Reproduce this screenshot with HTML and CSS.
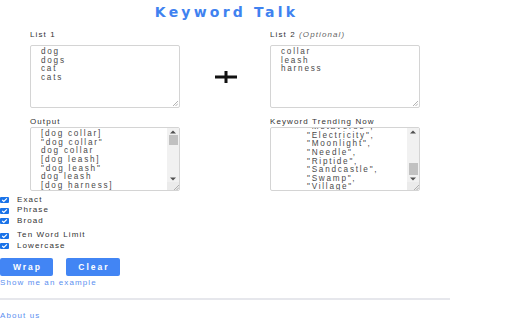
FILE: index.html
```html
<!DOCTYPE html>
<html lang="en">
<head>
<meta charset="utf-8">
<title>Keyword Talk</title>
<link rel="stylesheet" href="styles.css">
</head>
<body>
<h1 class="title">Keyword Talk</h1>

<div class="lists">
  <div class="field">
    <div class="label">List 1</div>
    <div class="box">
      <div class="box-text">dog
dogs
cat
cats</div>
      <span class="grip"><svg width="6" height="6" viewBox="0 0 6 6"><path d="M1 6 L6 1 M3.5 6 L6 3.5" stroke="#a0a0a0" stroke-width="0.8"/></svg></span>
    </div>
  </div>

  <div class="plus">
    <svg width="22" height="12" viewBox="0 0 22 12"><rect x="0" y="4.5" width="22" height="3" fill="#111"/><rect x="9.5" y="0" width="3" height="12" fill="#111"/></svg>
  </div>

  <div class="field">
    <div class="label">List 2 <i class="optional">(Optional)</i></div>
    <div class="box">
      <div class="box-text">collar
leash
harness</div>
      <span class="grip"><svg width="6" height="6" viewBox="0 0 6 6"><path d="M1 6 L6 1 M3.5 6 L6 3.5" stroke="#a0a0a0" stroke-width="0.8"/></svg></span>
    </div>
  </div>

  <div class="field field-low">
    <div class="label label-low">Output</div>
    <div class="box box-scroll">
      <div class="box-text">[dog collar]
"dog collar"
dog collar
[dog leash]
"dog leash"
dog leash
[dog harness]
"dog harness"
dog harness</div>
      <div class="scrollbar">
        <span class="sb-btn"><svg width="6" height="4" viewBox="0 0 6 4"><path d="M0 3.5 L3 0.5 L6 3.5 Z" fill="#505050"/></svg></span>
        <span class="sb-track"><span class="sb-thumb thumb-top"></span></span>
        <span class="sb-btn"><svg width="6" height="4" viewBox="0 0 6 4"><path d="M0 0.5 L3 3.5 L6 0.5 Z" fill="#505050"/></svg></span>
        <span class="sb-corner"><svg width="6" height="6" viewBox="0 0 6 6"><path d="M1 6 L6 1 M3.5 6 L6 3.5" stroke="#a0a0a0" stroke-width="0.8"/></svg></span>
      </div>
    </div>
  </div>

  <div class="spacer"></div>

  <div class="field field-low">
    <div class="label label-low">Keyword Trending Now</div>
    <div class="box box-scroll">
      <div class="box-text trending"><div class="trend-inner">"Metaverse",
"Electricity",
"Moonlight",
"Needle",
"Riptide",
"Sandcastle",
"Swamp",
"Village"</div></div>
      <div class="scrollbar">
        <span class="sb-btn"><svg width="6" height="4" viewBox="0 0 6 4"><path d="M0 3.5 L3 0.5 L6 3.5 Z" fill="#505050"/></svg></span>
        <span class="sb-track sb-track-end"><span class="sb-thumb thumb-bottom"></span></span>
        <span class="sb-btn"><svg width="6" height="4" viewBox="0 0 6 4"><path d="M0 0.5 L3 3.5 L6 0.5 Z" fill="#505050"/></svg></span>
        <span class="sb-corner"><svg width="6" height="6" viewBox="0 0 6 6"><path d="M1 6 L6 1 M3.5 6 L6 3.5" stroke="#a0a0a0" stroke-width="0.8"/></svg></span>
      </div>
    </div>
  </div>
</div>

<div class="options">
  <div class="opt-group">
    <div class="opt"><span class="check"><svg width="9" height="6" viewBox="0 0 9 6"><path d="M2.2 3 L3.8 4.5 L6.9 1.4" stroke="#fff" stroke-width="1.2" fill="none"/></svg></span>Exact</div>
    <div class="opt"><span class="check"><svg width="9" height="6" viewBox="0 0 9 6"><path d="M2.2 3 L3.8 4.5 L6.9 1.4" stroke="#fff" stroke-width="1.2" fill="none"/></svg></span>Phrase</div>
    <div class="opt"><span class="check"><svg width="9" height="6" viewBox="0 0 9 6"><path d="M2.2 3 L3.8 4.5 L6.9 1.4" stroke="#fff" stroke-width="1.2" fill="none"/></svg></span>Broad</div>
  </div>
  <div class="opt-group opt-group-2">
    <div class="opt"><span class="check"><svg width="9" height="6" viewBox="0 0 9 6"><path d="M2.2 3 L3.8 4.5 L6.9 1.4" stroke="#fff" stroke-width="1.2" fill="none"/></svg></span>Ten Word Limit</div>
    <div class="opt"><span class="check"><svg width="9" height="6" viewBox="0 0 9 6"><path d="M2.2 3 L3.8 4.5 L6.9 1.4" stroke="#fff" stroke-width="1.2" fill="none"/></svg></span>Lowercase</div>
  </div>
</div>

<div class="buttons">
  <button class="btn btn-wrap">Wrap</button>
  <button class="btn btn-clear">Clear</button>
</div>

<a class="link example" href="#">Show me an example</a>
<div class="rule"></div>
<a class="link about" href="#">About us</a>
</body>
</html>
```

FILE: styles.css
```css
html, body {
  margin: 0;
  padding: 0;
  background: #fff;
}
body {
  font-family: "Liberation Sans", Arial, sans-serif;
  font-size: 8px;
  letter-spacing: 1.1px;
  color: #333;
  width: 512px;
  height: 320px;
  overflow: hidden;
}
.title {
  margin: 0;
  width: 450px;
  height: 24px;
  font-family: "DejaVu Sans", "Liberation Sans", sans-serif;
  font-size: 14px;
  line-height: 24px;
  font-weight: bold;
  letter-spacing: 3.2px;
  color: #3f82f0;
  text-align: center;
  padding-left: 3px;
  box-sizing: border-box;
}
.lists {
  display: grid;
  grid-template-columns: 150px 90px 150px;
  margin-left: 30px;
  padding-top: 5px;
}
.label {
  line-height: 12px;
  margin-bottom: 4px;
  color: #333;
}
.optional {
  color: #666;
}
.field-low {
  margin-top: 8px;
}
.label-low {
  line-height: 11px;
  margin-bottom: 0;
}
.box {
  position: relative;
  box-sizing: border-box;
  height: 63px;
  border: 1px solid #d4d4d4;
  border-radius: 2px;
  background: #fff;
  overflow: hidden;
}
.field-low .box {
  height: 64px;
}
.box-text {
  white-space: pre;
  font-size: 8.2px;
  line-height: 8.6px;
  letter-spacing: 1.75px;
  color: #4a4a4a;
  padding: 2.2px 0 0 10px;
}
.box-scroll {
  display: flex;
}
.box-scroll .box-text {
  flex: 1;
  overflow: hidden;
}
.trending {
  padding-left: 36px;
}
.trend-inner {
  margin-top: -7px;
}
.grip {
  position: absolute;
  right: 1px;
  bottom: 1px;
  width: 6px;
  height: 6px;
  display: flex;
}
.plus {
  display: flex;
  align-items: center;
  justify-content: center;
  padding-top: 16px;
  padding-left: 2px;
}
.scrollbar {
  width: 12px;
  display: flex;
  flex-direction: column;
  background: #f1f1f1;
}
.sb-btn {
  height: 7px;
  display: flex;
  align-items: center;
  justify-content: center;
}
.sb-track {
  flex: 1;
  display: flex;
  flex-direction: column;
  align-items: center;
}
.sb-track-end {
  justify-content: flex-end;
}
.sb-thumb {
  width: 9px;
  background: #c1c1c1;
}
.thumb-top {
  height: 10px;
}
.thumb-bottom {
  height: 12px;
}
.sb-corner {
  height: 8px;
  background: #ebebeb;
  display: flex;
  align-items: flex-end;
  justify-content: flex-end;
}
.options {
  margin-top: 4px;
}
.opt {
  display: flex;
  align-items: center;
  line-height: 10.4px;
  height: 10.4px;
  color: #333;
}
.opt-group-2 {
  margin-top: 4.3px;
}
.check {
  width: 9px;
  height: 6px;
  border-radius: 1px;
  background: #1a73e8;
  margin-right: 8px;
  display: flex;
}
.buttons {
  display: flex;
  gap: 13px;
  margin-top: 6.7px;
}
.btn {
  height: 18px;
  border: none;
  border-radius: 2px;
  background: #4285f4;
  color: #fff;
  font-family: "Liberation Sans", Arial, sans-serif;
  font-size: 8.5px;
  font-weight: bold;
  letter-spacing: 2px;
  padding: 0 0 0 2px;
}
.btn-wrap {
  width: 53px;
}
.btn-clear {
  width: 54px;
}
.link {
  display: block;
  color: #5b8ff0;
  text-decoration: none;
  line-height: 10px;
}
.example {
  margin-top: 2px;
}
.rule {
  width: 450px;
  height: 2px;
  background: #e6e7ec;
  margin-top: 10px;
}
.about {
  margin-top: 11.3px;
}
```
